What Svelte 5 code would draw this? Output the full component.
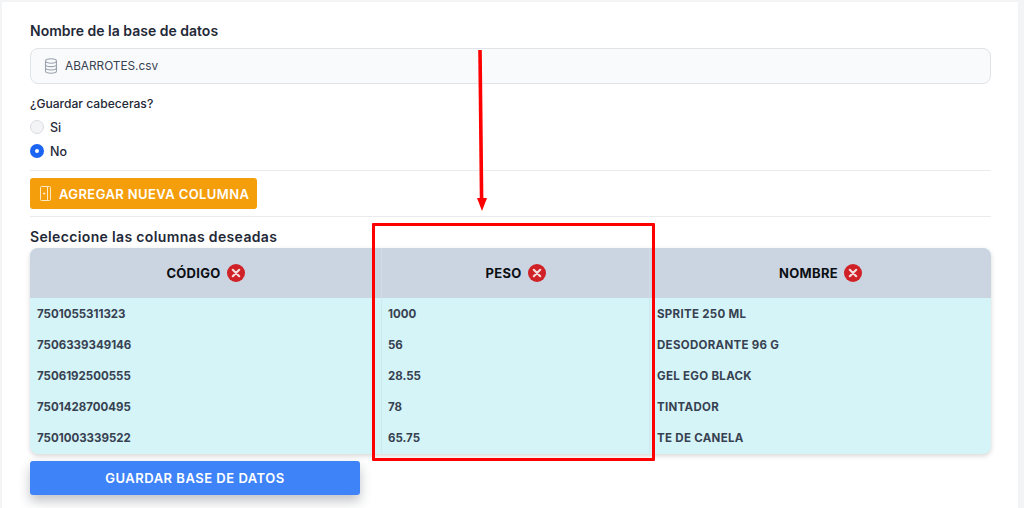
<script lang="ts">
  const columns = [
    { name: 'CÓDIGO', rows: ['7501055311323', '7506339349146', '7506192500555', '7501428700495', '7501003339522'] },
    { name: 'PESO', rows: ['1000', '56', '28.55', '78', '65.75'] },
    { name: 'NOMBRE', rows: ['SPRITE 250 ML', 'DESODORANTE 96 G', 'GEL EGO BLACK', 'TINTADOR', 'TE DE CANELA'] }
  ];
</script>

<main class="page">
  <section class="card">
    <label class="card__label" for="db-name">Nombre de la base de datos</label>
    <div class="field" id="db-name">
      <svg class="field__icon" viewBox="0 0 14 16" width="14" height="16" fill="none" stroke="#9ca3af" stroke-width="1.1">
        <ellipse cx="7" cy="3" rx="5.5" ry="2.2" />
        <path d="M1.5 3v10c0 1.2 2.5 2.2 5.5 2.2s5.5-1 5.5-2.2V3" />
        <path d="M1.5 6.4c0 1.2 2.5 2.2 5.5 2.2s5.5-1 5.5-2.2" />
        <path d="M1.5 9.8c0 1.2 2.5 2.2 5.5 2.2s5.5-1 5.5-2.2" />
      </svg>
      <span>ABARROTES.csv</span>
    </div>

    <p class="card__question">¿Guardar cabeceras?</p>
    <div class="radio radio--first"><span class="radio__dot"></span>Si</div>
    <div class="radio"><span class="radio__dot radio__dot--on"></span>No</div>

    <hr class="card__rule" />

    <button type="button" class="add-btn">
      <svg viewBox="0 0 11 15" width="11" height="15" fill="none" stroke="#fde9c4" stroke-width="1">
        <rect x="0.5" y="0.5" width="10" height="14" rx="1" />
        <path d="M7.5 1v13" />
        <path d="M3 7.5h2.4M4.2 6.3v2.4" />
      </svg>
      AGREGAR NUEVA COLUMNA
    </button>

    <hr class="card__rule" />

    <h2 class="card__title">Seleccione las columnas deseadas</h2>
    <div class="table">
      {#each columns as col}
        <div class="table__col">
          <div class="table__head">
            {col.name}
            <span class="table__remove">
              <svg viewBox="0 0 18 18" width="18" height="18">
                <circle cx="9" cy="9" r="9" fill="#d02126" />
                <path d="M5.8 5.8l6.4 6.4M12.2 5.8l-6.4 6.4" stroke="#f3dcdc" stroke-width="2.2" stroke-linecap="round" />
              </svg>
            </span>
          </div>
          {#each col.rows as row}
            <div class="table__cell">{row}</div>
          {/each}
        </div>
      {/each}
    </div>

    <button type="button" class="save-btn">GUARDAR BASE DE DATOS</button>
  </section>

  <!-- annotation drawn over the screenshot -->
  <svg class="arrow" viewBox="0 0 20 170" width="20" height="170">
    <path d="M9 2L10.6 152" stroke="#fe0000" stroke-width="3.6" fill="none" />
    <path d="M6 150h10l-5 13z" fill="#fe0000" />
  </svg>
  <div class="highlight"></div>
</main>

<style>
  :global(body) {
    margin: 0;
    background: #f3f4f6;
  }

  .page {
    position: relative;
    height: 508px;
    padding: 2px 6px 0 2px;
    box-sizing: border-box;
    overflow: hidden;
    font-family: Inter, "Liberation Sans", sans-serif;
    color: #1f2937;
  }

  .card {
    display: flex;
    flex-direction: column;
    align-items: flex-start;
    height: 100%;
    padding: 20px 27px 0 28px;
    box-sizing: border-box;
    background: #fff;
  }

  .card__label {
    font-size: 14px;
    font-weight: 600;
    line-height: 18px;
    color: #1f2937;
  }

  .field {
    display: flex;
    align-items: center;
    gap: 7px;
    width: 100%;
    height: 36px;
    margin-top: 8px;
    padding-left: 13px;
    box-sizing: border-box;
    border: 1px solid #e0e3e8;
    border-radius: 8px;
    background: #f9fafb;
    font-size: 11.8px;
    color: #374151;
  }

  .card__question {
    margin: 11px 0 0;
    padding-top: 1px;
    font-size: 12.1px;
    font-weight: 500;
    line-height: 16px;
    color: #1f2937;
  }

  .radio {
    display: flex;
    align-items: center;
    gap: 6px;
    height: 24px;
    font-size: 12.5px;
    font-weight: 500;
    color: #1f2937;
  }

  .radio--first {
    margin-top: 3px;
  }

  .radio__dot {
    width: 14px;
    height: 14px;
    box-sizing: border-box;
    border: 1px solid #d9dce1;
    border-radius: 50%;
    background: #f3f4f6;
  }

  .radio__dot--on {
    border: 5px solid #1c64f2;
    background: #fff;
  }

  .card__rule {
    width: 100%;
    height: 1px;
    margin: 7px 0 0;
    border: 0;
    background: #e9ebee;
  }

  .add-btn {
    display: flex;
    align-items: center;
    gap: 8px;
    width: 227px;
    height: 31px;
    margin-top: 7px;
    padding: 0 0 0 10px;
    border: 0;
    border-radius: 3px;
    background: #f59e0b;
    color: #fff;
    font-family: inherit;
    font-size: 13px;
    font-weight: 600;
    letter-spacing: 0.4px;
    white-space: nowrap;
  }

  .card__title {
    margin: 12px 0 0;
    font-size: 14px;
    font-weight: 600;
    letter-spacing: 0.35px;
    line-height: 16px;
    color: #1f2937;
  }

  .table {
    display: grid;
    grid-template-columns: 351px 269px 341px;
    width: 100%;
    margin-top: 3px;
    padding-bottom: 1px;
    border-radius: 8px;
    overflow: hidden;
    background: #d5f4f7;
    box-shadow: 0 2px 5px rgba(0, 0, 0, 0.16);
  }

  .table__col {
    display: flex;
    flex-direction: column;
  }

  .table__head {
    display: flex;
    align-items: center;
    justify-content: center;
    gap: 6px;
    height: 50px;
    background: #cbd5e1;
    color: #0b0f14;
    font-size: 13px;
    font-weight: 700;
    letter-spacing: 0.3px;
  }

  .table__col:nth-child(2) .table__head {
    box-shadow: inset 1px 0 0 #d3dce6, inset -1px 0 0 #d3dce6;
  }

  .table__remove {
    display: flex;
  }

  .table__cell {
    display: flex;
    align-items: center;
    height: 31px;
    padding-left: 7px;
    font-size: 11.5px;
    font-weight: 700;
    color: #374151;
  }

  .table__col:nth-child(2) .table__cell {
    box-shadow: inset 1px 0 0 #cfeaee, inset -1px 0 0 #cfeaee;
  }

  .table__col:last-child .table__cell {
    letter-spacing: 0.3px;
  }

  .save-btn {
    width: 330px;
    height: 34px;
    margin-top: 7px;
    border: 0;
    border-radius: 3px;
    background: #3f83f8;
    color: #fff;
    font-family: inherit;
    font-size: 13px;
    font-weight: 600;
    letter-spacing: 0.5px;
    box-shadow: 0 6px 12px rgba(30, 41, 59, 0.28);
  }

  .arrow {
    position: absolute;
    left: 471px;
    top: 48px;
  }

  .highlight {
    position: absolute;
    left: 372px;
    top: 223px;
    width: 283px;
    height: 238px;
    box-sizing: border-box;
    border: 3px solid #fe0000;
    border-radius: 1px;
  }
</style>
